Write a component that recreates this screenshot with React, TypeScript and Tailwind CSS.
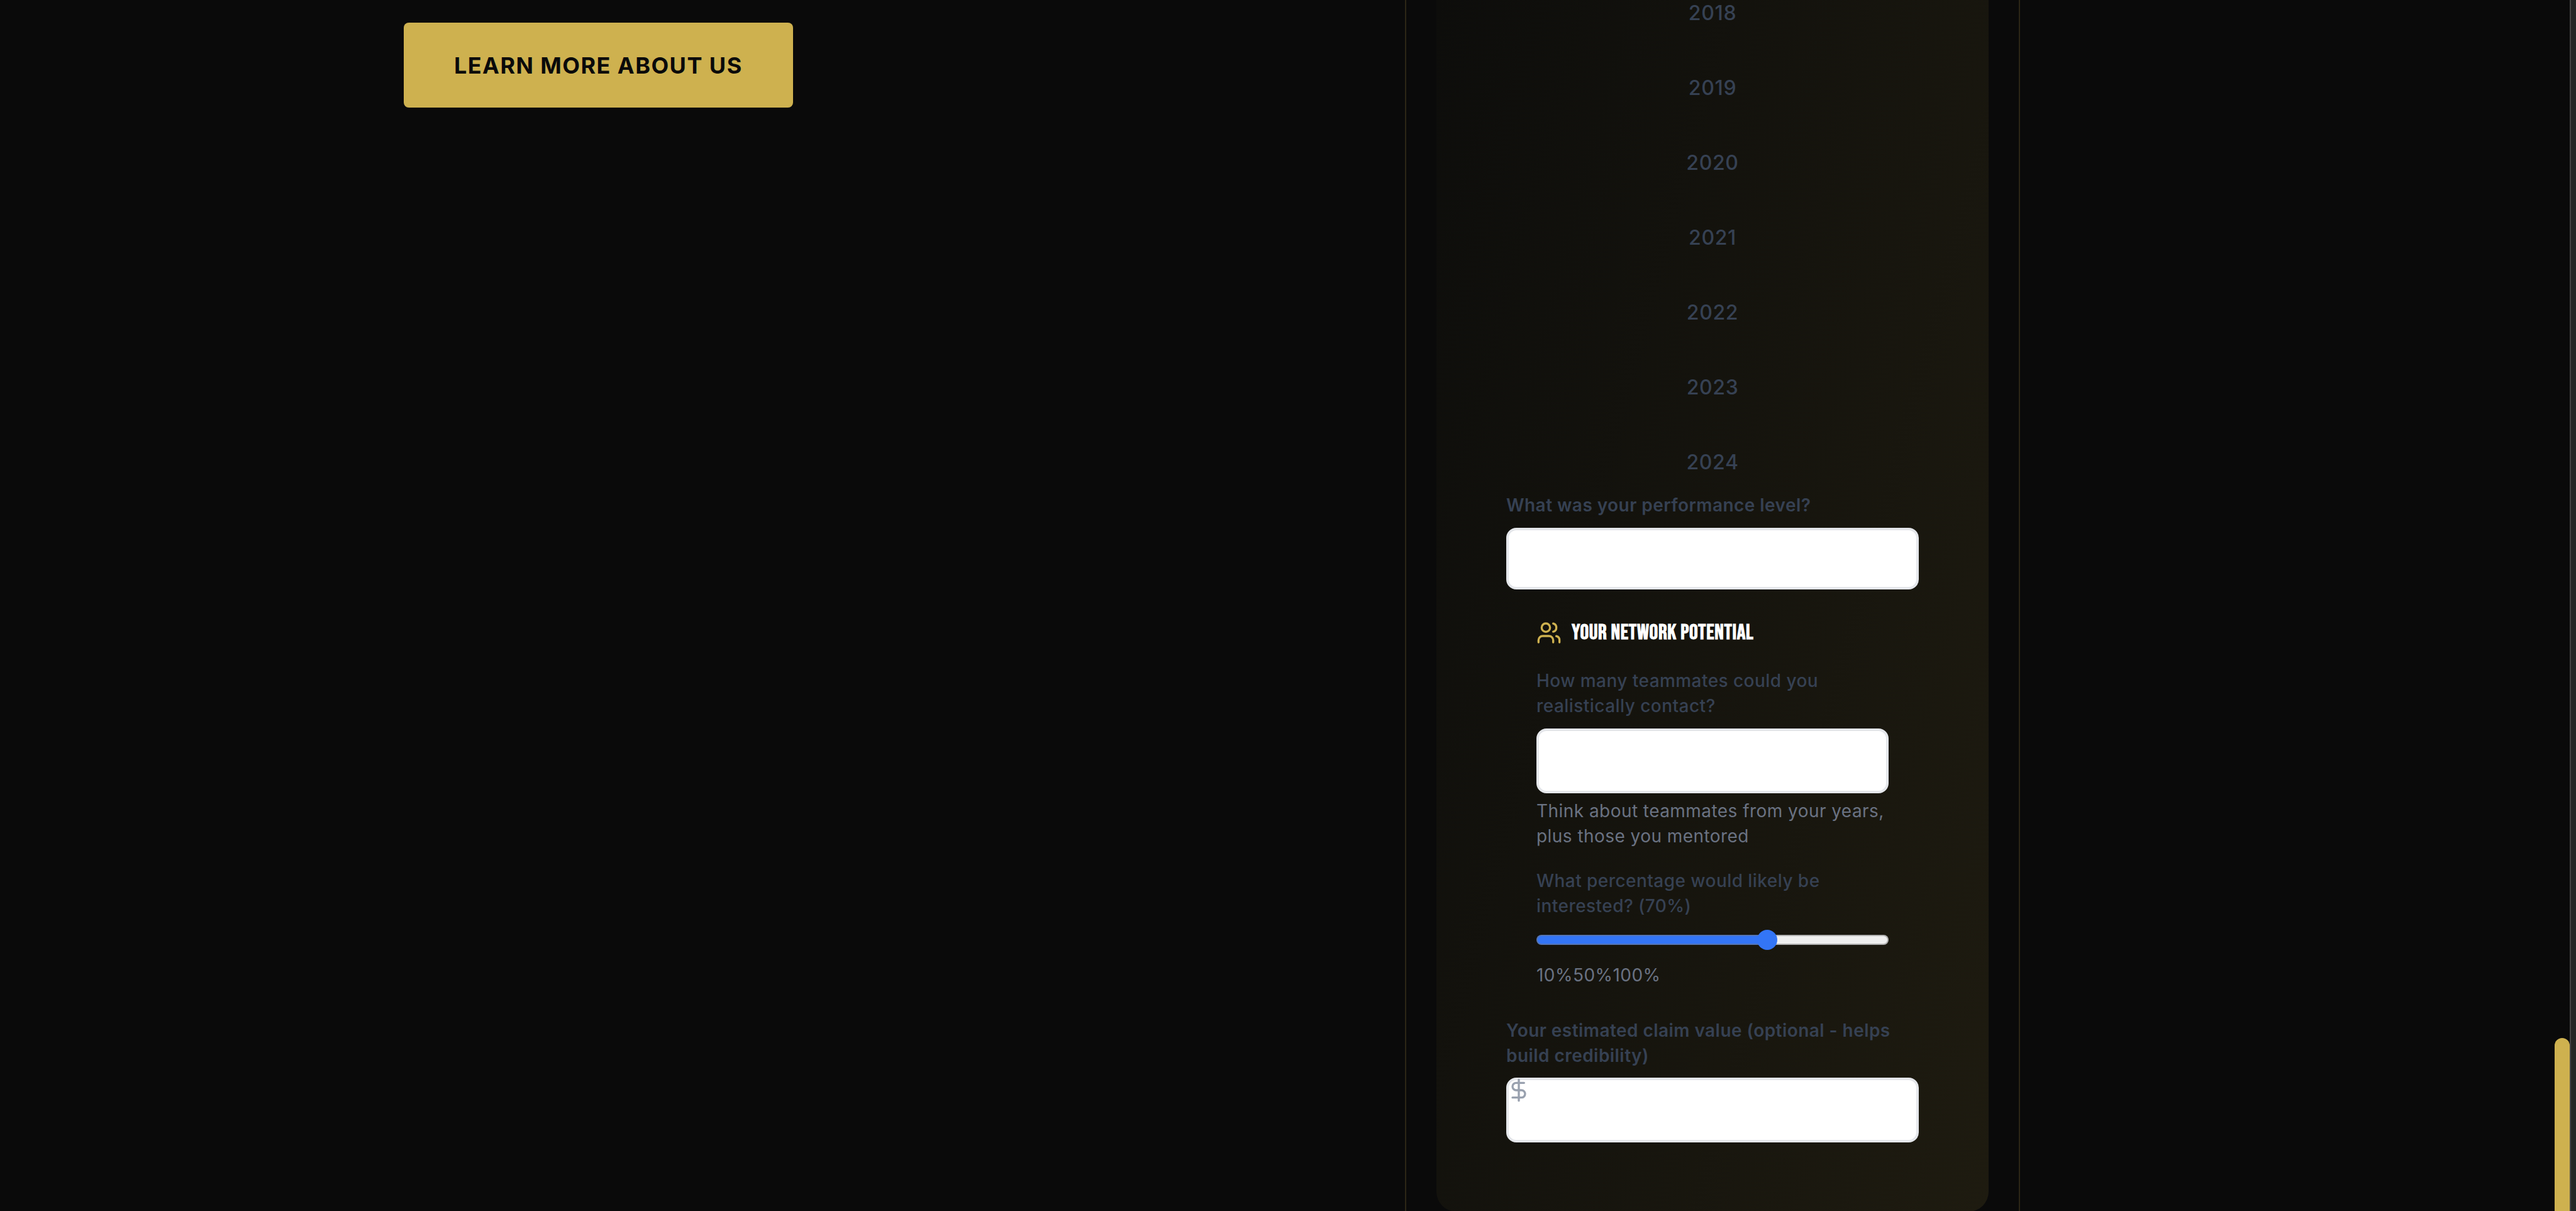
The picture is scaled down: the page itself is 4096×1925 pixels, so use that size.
import { Users, DollarSign } from "lucide-react";

const years = [2018, 2019, 2020, 2021, 2022, 2023, 2024];

const fieldClass =
  "block w-full rounded-2xl border-4 border-gray-200 bg-white px-6 text-[28px] text-gray-900 outline-none";

export default function App() {
  return (
    <div className="flex h-screen overflow-hidden bg-[#0a0a0a] font-['Inter','Liberation_Sans',sans-serif]">
      <main className="grid flex-1 grid-cols-[2234fr_978fr_850fr] items-start overflow-hidden">
        <section className="pl-[642px] pt-9">
          <button
            type="button"
            className="h-[135px] rounded-lg bg-[#ceb14f] px-20 text-4xl font-bold tracking-[0.04em] text-[#0a0a0a]"
          >
            LEARN MORE ABOUT US
          </button>
        </section>

        <section className="h-screen overflow-hidden border-x-2 border-[#2c2616] px-12">
          <form className="rounded-b-[32px] bg-[linear-gradient(105deg,#0d0d0b,#1e1b10)] px-[111px] pb-[110px] pt-px">
            <ul className="flex flex-col gap-[79px] text-center text-[32px] font-medium leading-10 tracking-[0.02em] text-gray-700">
              {years.map((year) => (
                <li key={year}>{year}</li>
              ))}
            </ul>

            <label
              htmlFor="level"
              className="mt-7 block text-[28px] font-semibold leading-10 tracking-[0.016em] text-gray-700"
            >
              What was your performance level?
            </label>
            <input id="level" type="text" className={`${fieldClass} mt-4 h-[98px]`} />

            <div className="px-12 pt-[46px]">
              <h3 className="flex items-center gap-4 font-['Bebas_Neue','Liberation_Sans_Narrow','Roboto',sans-serif] text-[34px] font-bold leading-[46px] tracking-[0.02em] text-white">
                <Users size={40} className="shrink-0 text-[#ceb14f]" />
                YOUR NETWORK POTENTIAL
              </h3>
              <label
                htmlFor="teammates"
                className="mt-[33px] block text-[28px] font-medium leading-10 tracking-[0.016em] text-gray-700"
              >
                How many teammates could you realistically contact?
              </label>
              <input id="teammates" type="text" className={`${fieldClass} mt-4 h-[103px]`} />
              <p className="mt-2 text-[28px] leading-10 tracking-[0.016em] text-gray-500">
                Think about teammates from your years, plus those you mentored
              </p>
              <label
                htmlFor="interest"
                className="mt-[31px] block text-[28px] font-medium leading-10 tracking-[0.016em] text-gray-700"
              >
                What percentage would likely be interested? (70%)
              </label>
              <input
                id="interest"
                type="range"
                min={10}
                max={100}
                defaultValue={70}
                className="mt-[18px] block h-8 w-full appearance-none bg-transparent [&::-webkit-slider-runnable-track]:h-4 [&::-webkit-slider-runnable-track]:rounded-full [&::-webkit-slider-runnable-track]:border-2 [&::-webkit-slider-runnable-track]:border-[#76767680] [&::-webkit-slider-runnable-track]:bg-[linear-gradient(to_right,#3375f6_66%,#efefef_66%)] [&::-webkit-slider-runnable-track]:bg-origin-border [&::-webkit-slider-thumb]:-mt-[10px] [&::-webkit-slider-thumb]:size-8 [&::-webkit-slider-thumb]:appearance-none [&::-webkit-slider-thumb]:rounded-full [&::-webkit-slider-thumb]:bg-[#3375f6]"
              />
              <p className="mt-5 text-[28px] leading-10 tracking-[0.016em] text-gray-500">
                <span>10%</span>
                <span>50%</span>
                <span>100%</span>
              </p>
            </div>

            <label
              htmlFor="claim"
              className="mt-12 block text-[28px] font-semibold leading-10 tracking-[0.016em] text-gray-700"
            >
              Your estimated claim value (optional - helps build credibility)
            </label>
            <div className="relative mt-[15px]">
              <input id="claim" type="text" className={`${fieldClass} h-[103px]`} />
              <DollarSign size={40} className="absolute left-0 top-0 text-gray-400" />
            </div>
          </form>
        </section>
      </main>

      <div aria-hidden="true" className="flex w-[34px] items-end">
        <div className="h-[275px] w-6 rounded-t-full bg-[#ceb14f]" />
        <div className="h-full w-[10px] border-l-2 border-[#454545] bg-[#252726]" />
      </div>
    </div>
  );
}
